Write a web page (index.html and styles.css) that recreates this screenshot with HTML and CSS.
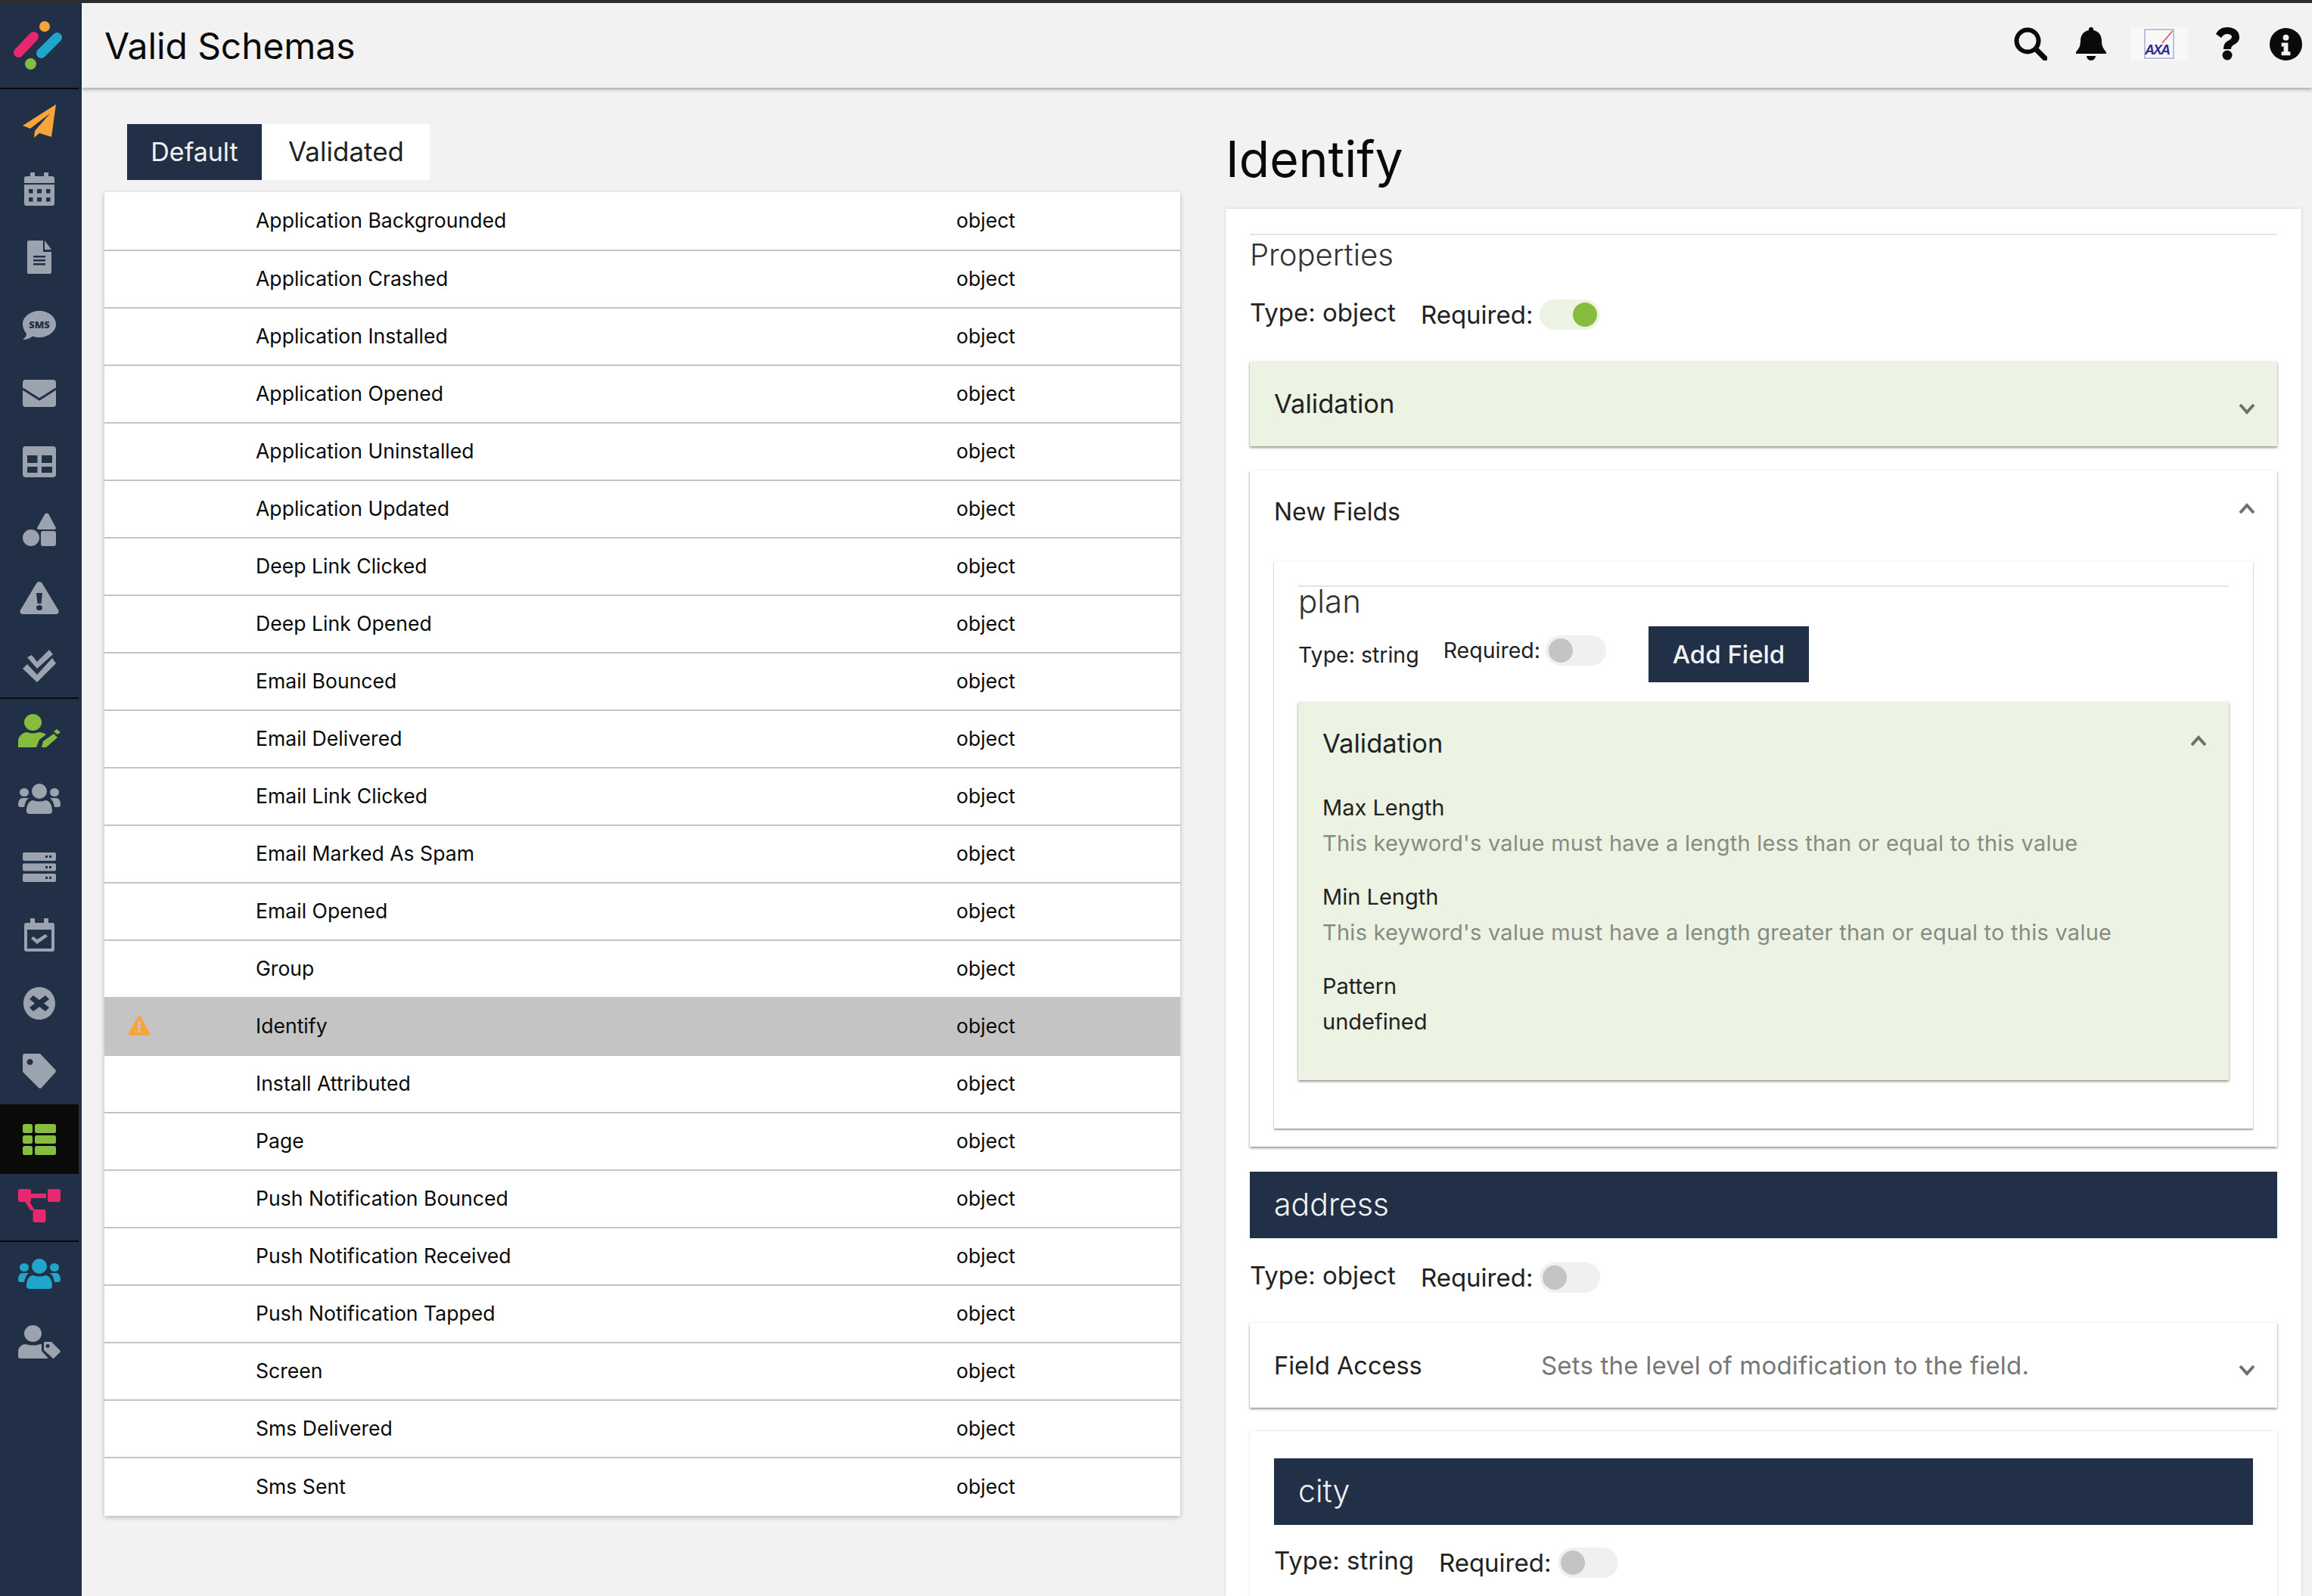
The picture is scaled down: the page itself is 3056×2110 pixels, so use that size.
FILE: index.html
```html
<!DOCTYPE html>
<html lang="en">

<head>
    <meta charset="UTF-8">
    <title>Valid Schemas</title>
    <link rel="stylesheet" href="styles.css">
</head>

<body>
    <div class="app">
        <nav class="sidebar">
            <div class="nav-logo">
                <svg width="64" height="64" viewBox="0 0 64 64">
                    <path d="M6.500 41.500L26.500 20.500" class="logo-pink" />
                    <path d="M36.500 42.500L57.500 21.500" class="logo-blue" />
                    <ellipse cx="41" cy="7" rx="7" ry="7" fill="#f9a43a" />
                    <ellipse cx="22.500" cy="56.500" rx="7.500" ry="7.500" fill="#86bd3f" />
                </svg>
            </div>
            <div class="nav-group group-tools">
                <a class="nav-item"><svg width="44" height="44" viewBox="0 0 44 44" fill="#f9a43a"><path d="M44 0L0 28l10 4 26-20-20 23-1 9 7-6 16 5z" /></svg></a>
                <a class="nav-item"><svg width="40" height="44" viewBox="0 0 40 44" fill="#9aa3ae"><path d="M3 5h5V0h6v5h12V0h6v5h5a3 3 0 0 1 3 3v6H0V8a3 3 0 0 1 3-3zM0 16h40v25a3 3 0 0 1-3 3H3a3 3 0 0 1-3-3z" /><path fill="#213047" d="M6 22h5.500v5.500H6zM17 22h6v5.500h-6zM29 22h5.500v5.500H29zM6 33h5.500v5.500H6zM17 33h6v5.500h-6zM29 33h5.500v5.500H29z" /></svg></a>
                <a class="nav-item"><svg width="32" height="44" viewBox="0 0 32 44" fill="#9aa3ae"><path d="M2 0h19v15h11v27a2 2 0 0 1-2 2H2a2 2 0 0 1-2-2V2a2 2 0 0 1 2-2z" /><path d="M23 0l9 12h-9z" /><path fill="#213047" d="M8 20h16v2.500H8zM8 25h16v2.500H8zM8 30h16v2.500H8z" /></svg></a>
                <a class="nav-item"><svg width="44" height="38" viewBox="0 0 44 38" fill="#9aa3ae"><path d="M22 0c12 0 22 8 22 17.500S34 35 22 35c-3 0-6-.5-9-1.500C10 36 6 38 0 38c3-2 5-5 5-8-3-3-5-8-5-12.500C0 8 10 0 22 0z" /><text x="22" y="23" class="sms-text">SMS</text></svg></a>
                <a class="nav-item"><svg width="44" height="36" viewBox="0 0 44 36" fill="#9aa3ae"><rect width="44" height="36" rx="4" /><path d="M0 12l22 14 22-14" fill="none" stroke="#213047" stroke-width="3" /></svg></a>
                <a class="nav-item"><svg width="44" height="41" viewBox="0 0 44 41" fill="#9aa3ae"><path fill-rule="evenodd" d="M4 0h36a4 4 0 0 1 4 4v33a4 4 0 0 1-4 4H4a4 4 0 0 1-4-4V4a4 4 0 0 1 4-4zM6 12v10h13.500V12zM25 12v10h14V12zM6 27v8h13.500v-8zM25 27v8h14v-8z" /></svg></a>
                <a class="nav-item"><svg width="44" height="44" viewBox="0 0 44 44" fill="#9aa3ae"><path d="M29 2c1.500-2 4-2 5.500 0l9 17c1 1.500 0 3-2 3h-20c-2 0-3-1.500-2-3z" /><circle cx="11" cy="33" r="11" /><rect x="24" y="24" width="20" height="20" rx="3" /></svg></a>
                <a class="nav-item"><svg width="52" height="43" viewBox="0 0 52 43" fill="#9aa3ae"><path d="M26 0c2 0 3 1 4 2.500l21 35c1.500 3 0 5.500-3 5.500H4c-3 0-4.500-2.500-3-5.500l21-35C23 1 24 0 26 0z" /><path fill="#213047" d="M22 15h8l-1.500 14h-5z" /><ellipse cx="26" cy="34.500" rx="4" ry="3.500" fill="#213047" /></svg></a>
                <a class="nav-item"><svg width="44" height="44" viewBox="0 0 44 44" fill="#9aa3ae"><path d="M6 11l6-3 7 9L35 1l5 6-21 19zM0 26l6-6 13 14 20-22 5 7-25 25z" /></svg></a>
            </div>
            <div class="nav-group group-data">
                <a class="nav-item"><svg width="56" height="44" viewBox="0 0 56 44" fill="#86bd3f"><ellipse cx="19.500" cy="11" rx="11.500" ry="11" /><path d="M0 44v-8c0-7 6-12 12-12 5 2 10 2 15 0 4 0 7 1 10 3l-9 7-4 10z" /><path d="M31 44l2-8 14-10 5 5-15 13zM47 23l4-3 5 4-4 3z" /></svg></a>
                <a class="nav-item"><svg width="56" height="40" viewBox="0 0 56 40" fill="#9aa3ae"><ellipse cx="28" cy="10" rx="10" ry="10" /><ellipse cx="8" cy="11.500" rx="6" ry="5.500" /><ellipse cx="48" cy="11.500" rx="6" ry="5.500" /><path d="M15 40a4 4 0 0 1-4-4c0-8 4-14 9-14 5 2 11 2 16 0 5 0 9 6 9 14a4 4 0 0 1-4 4zM0 28c0-5 2-9 6-9h8c-3 2-5 6-6 12H3a3 3 0 0 1-3-3zM56 28c0-5-2-9-6-9h-8c3 2 5 6 6 12h5a3 3 0 0 0 3-3z" /></svg></a>
                <a class="nav-item"><svg width="44" height="39" viewBox="0 0 44 39" fill="#9aa3ae"><path fill-rule="evenodd" d="M2 0h40a2 2 0 0 1 2 2v7a2 2 0 0 1-2 2H2a2 2 0 0 1-2-2V2a2 2 0 0 1 2-2zM30 4v3h3V4zM35 4v3h3V4zM2 14.500h40a2 2 0 0 1 2 2v6a2 2 0 0 1-2 2H2a2 2 0 0 1-2-2v-6a2 2 0 0 1 2-2zM30 18v3h3v-3zM35 18v3h3v-3zM2 28h40a2 2 0 0 1 2 2v7a2 2 0 0 1-2 2H2a2 2 0 0 1-2-2v-7a2 2 0 0 1 2-2zM30 32v3h3v-3zM35 32v3h3v-3z" /></svg></a>
                <a class="nav-item"><svg width="40" height="44" viewBox="0 0 40 44" fill="#9aa3ae"><path fill-rule="evenodd" d="M8 0h6v6h12V0h6v6h5a3 3 0 0 1 3 3v32a3 3 0 0 1-3 3H3a3 3 0 0 1-3-3V9a3 3 0 0 1 3-3h5zM4 15v25h32V15z" /><path d="M9 27l3-3 5 4 11-7 3 3-14 10z" /></svg></a>
                <a class="nav-item"><svg width="42" height="43" viewBox="0 0 42 43" fill="#9aa3ae"><path fill-rule="evenodd" d="M21 0c12 0 21 9.500 21 21.500S33 43 21 43 0 33.500 0 21.500 9 0 21 0zM13 11l-5 5 7 5.500-7 5.500 5 5 8-6 8 6 5-5-7-5.500 7-5.500-5-5-8 6z" /></svg></a>
                <a class="nav-item"><svg width="44" height="46" viewBox="0 0 44 46" fill="#9aa3ae"><path fill-rule="evenodd" d="M3 0h20l20 21a3 3 0 0 1 0 4L25 45a3 3 0 0 1-4 0L1 25a3 3 0 0 1-1-2V3a3 3 0 0 1 3-3zM9.500 7a4 4 0 1 0 .1 0z" /></svg></a>
                <a class="nav-item nav-active"><svg width="44" height="41" viewBox="0 0 44 41" fill="#86bd3f"><rect width="13" height="12" rx="2.500" /><rect x="16" width="28" height="12" rx="2.500" /><rect y="15" width="13" height="11" rx="2.500" /><rect x="16" y="15" width="28" height="11" rx="2.500" /><rect y="29" width="13" height="12" rx="2.500" /><rect x="16" y="29" width="28" height="12" rx="2.500" /></svg></a>
                <a class="nav-item"><svg width="56" height="44" viewBox="0 0 56 44" fill="#e8276f"><rect width="17" height="17" rx="2.500" /><rect x="39" width="17" height="17" rx="2.500" /><rect x="19.500" y="27" width="17" height="17" rx="2.500" /><path d="M15 6h22v6H15zM8 15h6l8 13h-6z" /></svg></a>
            </div>
            <div class="nav-group">
                <a class="nav-item"><svg width="56" height="40" viewBox="0 0 56 40" fill="#20a6cc"><ellipse cx="28" cy="10" rx="10" ry="10" /><ellipse cx="8" cy="11.500" rx="6" ry="5.500" /><ellipse cx="48" cy="11.500" rx="6" ry="5.500" /><path d="M15 40a4 4 0 0 1-4-4c0-8 4-14 9-14 5 2 11 2 16 0 5 0 9 6 9 14a4 4 0 0 1-4 4zM0 28c0-5 2-9 6-9h8c-3 2-5 6-6 12H3a3 3 0 0 1-3-3zM56 28c0-5-2-9-6-9h-8c3 2 5 6 6 12h5a3 3 0 0 0 3-3z" /></svg></a>
                <a class="nav-item"><svg width="56" height="44" viewBox="0 0 56 44" fill="#9aa3ae"><ellipse cx="19.500" cy="11" rx="11.500" ry="11" /><path d="M0 41v-6c0-6 5-10 10-10 6 2 13 2 19 0 1 0 2 0 2 .5V34l9 10H3a3 3 0 0 1-3-3z" /><path fill-rule="evenodd" d="M35 22h9l11 11a2 2 0 0 1 0 3l-7 7a2 2 0 0 1-3 0L34 33v-9a2 2 0 0 1 1-2zM39 25a2.500 2.500 0 1 0 .1 0z" /></svg></a>
            </div>
        </nav>

        <div class="main">
            <header class="topbar">
                <h1 class="page-title">Valid Schemas</h1>
                <div class="top-icons">
                    <svg class="icon-search" viewBox="0 0 44 44" fill="none" stroke="#0a0a0a"><circle cx="18" cy="18" r="14.500" stroke-width="6" /><path d="M29 29l12 12" stroke-width="7" stroke-linecap="round" /></svg>
                    <svg class="icon-bell" viewBox="0 0 40 44" fill="#0a0a0a"><path d="M20 0a3 3 0 0 1 3 4c7 1 11 7 11 14 0 8 3 11 6 15v2H0v-2c3-4 6-7 6-15C6 11 10 5 17 4a3 3 0 0 1 3-4zM14 38h12c0 3-3 6-6 6s-6-3-6-6z" /></svg>
                    <div class="axa-logo">
                        <svg width="40" height="40" viewBox="0 0 40 40">
                            <rect x="1" y="1" width="38" height="38" fill="#f8f8f8" stroke="#a9acd4" stroke-width="1.500" />
                            <path d="M37.500 3L24 19" stroke="#ee3a4e" stroke-width="1.500" />
                            <text x="17" y="34" class="axa-text">AXA</text>
                        </svg>
                    </div>
                    <svg class="icon-help" viewBox="0 0 32 44" fill="#0a0a0a"><path d="M16 0c9 0 16 5 16 13 0 5-3 8-7 10-3 2-4 3-4 6H11c0-6 2-9 6-11 3-2 5-3 5-5 0-3-3-4-6-4-4 0-6 2-8 5L1 9C4 3 9 0 16 0z" /><circle cx="16" cy="37" r="6.500" /></svg>
                    <svg class="icon-info" viewBox="0 0 44 44"><circle cx="22" cy="22" r="22" fill="#0a0a0a" /><circle cx="22" cy="13" r="4" fill="#f2f2f2" /><path d="M16 20h9v12h3v5H16v-5h3v-7h-3z" fill="#f2f2f2" /></svg>
                </div>
            </header>

            <div class="content">
                <section class="left-col">
                    <div class="tabs">
                        <button class="tab tab-on">Default</button>
                        <button class="tab">Validated</button>
                    </div>
                    <table class="schema-table">
                        <colgroup>
                            <col class="col-flag">
                            <col class="col-name">
                            <col>
                        </colgroup>
                        <tbody>
                            <tr><td></td><td>Application Backgrounded</td><td>object</td></tr>
                            <tr><td></td><td>Application Crashed</td><td>object</td></tr>
                            <tr><td></td><td>Application Installed</td><td>object</td></tr>
                            <tr><td></td><td>Application Opened</td><td>object</td></tr>
                            <tr><td></td><td>Application Uninstalled</td><td>object</td></tr>
                            <tr><td></td><td>Application Updated</td><td>object</td></tr>
                            <tr><td></td><td>Deep Link Clicked</td><td>object</td></tr>
                            <tr><td></td><td>Deep Link Opened</td><td>object</td></tr>
                            <tr><td></td><td>Email Bounced</td><td>object</td></tr>
                            <tr><td></td><td>Email Delivered</td><td>object</td></tr>
                            <tr><td></td><td>Email Link Clicked</td><td>object</td></tr>
                            <tr><td></td><td>Email Marked As Spam</td><td>object</td></tr>
                            <tr><td></td><td>Email Opened</td><td>object</td></tr>
                            <tr><td></td><td>Group</td><td>object</td></tr>
                            <tr class="row-selected">
                                <td><svg class="warn" viewBox="0 0 28 26"><path d="M14 0c1 0 2 1 2 1l12 22c1 2 0 3-2 3H2c-2 0-3-1-2-3L12 1s1-1 2-1z" fill="#f9a43a" /><path d="M12 8h4l-.5 9h-3z" fill="#c4c4c4" /><circle cx="14" cy="20.500" r="2" fill="#c4c4c4" /></svg></td>
                                <td>Identify</td><td>object</td>
                            </tr>
                            <tr><td></td><td>Install Attributed</td><td>object</td></tr>
                            <tr><td></td><td>Page</td><td>object</td></tr>
                            <tr><td></td><td>Push Notification Bounced</td><td>object</td></tr>
                            <tr><td></td><td>Push Notification Received</td><td>object</td></tr>
                            <tr><td></td><td>Push Notification Tapped</td><td>object</td></tr>
                            <tr><td></td><td>Screen</td><td>object</td></tr>
                            <tr><td></td><td>Sms Delivered</td><td>object</td></tr>
                            <tr><td></td><td>Sms Sent</td><td>object</td></tr>
                        </tbody>
                    </table>
                </section>

                <section class="right-col">
                    <h2 class="schema-title">Identify</h2>
                    <div class="panel">
                        <div class="rule"></div>
                        <h3 class="light-head">Properties</h3>
                        <div class="type-row">
                            <span class="type-label">Type: object</span>
                            <span class="req">Required:</span>
                            <span class="toggle toggle-on"><i></i></span>
                        </div>

                        <div class="accordion acc-green">
                            <span class="acc-title">Validation</span>
                            <svg class="chev" viewBox="0 0 22 15"><path d="M2 2l9 10 9-10" /></svg>
                        </div>

                        <div class="new-fields">
                            <div class="nf-head">
                                <span>New Fields</span>
                                <svg class="chev" viewBox="0 0 22 15"><path d="M2 13l9-10 9 10" /></svg>
                            </div>
                            <div class="nf-card">
                                <div class="rule"></div>
                                <h3 class="plan-head">plan</h3>
                                <div class="plan-row">
                                    <span class="plan-type">Type: string</span>
                                    <span class="plan-req">Required:</span>
                                    <span class="toggle toggle-sm"><i></i></span>
                                    <button class="add-btn">Add Field</button>
                                </div>
                                <div class="val-card">
                                    <div class="val-head">
                                        <span class="acc-title">Validation</span>
                                        <svg class="chev" viewBox="0 0 22 15"><path d="M2 13l9-10 9 10" /></svg>
                                    </div>
                                    <div class="val-item">
                                        <p>Max Length</p>
                                        <p class="muted">This keyword's value must have a length less than or equal to this value</p>
                                    </div>
                                    <div class="val-item">
                                        <p>Min Length</p>
                                        <p class="muted">This keyword's value must have a length greater than or equal to this value</p>
                                    </div>
                                    <div class="val-item">
                                        <p>Pattern</p>
                                        <p>undefined</p>
                                    </div>
                                </div>
                            </div>
                        </div>

                        <div class="field-bar">address</div>
                        <div class="type-row type-row-address">
                            <span class="type-label">Type: object</span>
                            <span class="req">Required:</span>
                            <span class="toggle"><i></i></span>
                        </div>

                        <div class="accordion acc-white">
                            <span class="acc-name">Field Access</span>
                            <span class="acc-desc">Sets the level of modification to the field.</span>
                            <svg class="chev" viewBox="0 0 22 15"><path d="M2 2l9 10 9-10" /></svg>
                        </div>

                        <div class="sub-card">
                            <div class="field-bar">city</div>
                            <div class="type-row type-row-city">
                                <span class="type-label">Type: string</span>
                                <span class="req">Required:</span>
                                <span class="toggle"><i></i></span>
                            </div>
                        </div>
                    </div>
                </section>
            </div>
        </div>
    </div>
</body>

</html>
```

FILE: styles.css
```css
* {
    margin: 0;
    padding: 0;
    box-sizing: border-box;
}

html,
body {
    height: 100%;
    overflow: hidden;
}

body {
    background: #f2f2f2;
    color: #0a0a0a;
    font-family: "Inter", "Noto Sans", sans-serif;
    font-size: 26.600px;
}

.app {
    display: flex;
    height: 2110px;
    overflow: hidden;
    border-top: 4px solid #2b2d33;
}

/* sidebar */
.sidebar {
    width: 108px;
    flex: none;
    background: #213047;
    display: flex;
    flex-direction: column;
}

.nav-logo {
    height: 112px;
    padding: 24px 0 0 18px;
    flex: none;
}

.logo-pink,
.logo-blue {
    fill: none;
    stroke-width: 13;
    stroke-linecap: round;
}

.logo-pink {
    stroke: #e8276f;
}

.logo-blue {
    stroke: #20a6cc;
}

.nav-group {
    border-top: 2px solid #0a0a08;
    margin-right: 4px;
    flex: none;
}

.group-tools {
    margin-bottom: -6px;
}

.group-data {
    margin-bottom: -2px;
}

.nav-item {
    height: 90px;
    display: flex;
    align-items: center;
    justify-content: center;
    padding-bottom: 6px;
}

.nav-active {
    background: #0a0a08;
    height: 92px;
    margin-top: -4px;
    padding-bottom: 0;
}

.sms-text {
    font: 800 13px "Open Sans", sans-serif;
    fill: #213047;
    text-anchor: middle;
}

/* top bar */
.main {
    flex: 1;
    min-width: 0;
}

.topbar {
    height: 112px;
    background: #f2f2f2;
    box-shadow: 0 2px 5px rgba(0, 0, 0, 0.35);
    display: flex;
    align-items: center;
    justify-content: space-between;
    padding: 0 13px 0 30px;
    position: relative;
}

.page-title {
    font-weight: 400;
    font-size: 48px;
    letter-spacing: -0.100px;
}

.top-icons {
    display: flex;
    align-items: center;
    margin-bottom: 4px;
}

.top-icons svg {
    flex: none;
}

.icon-search {
    width: 44px;
    height: 44px;
}

.icon-bell {
    width: 40px;
    height: 44px;
    margin-left: 38px;
}

.axa-logo {
    width: 76px;
    height: 44px;
    margin-left: 32px;
    background: #f8f8f8;
    display: flex;
    align-items: center;
    justify-content: center;
}

.axa-text {
    font: italic 700 18px "Liberation Sans", sans-serif;
    fill: #2a2f94;
    text-anchor: middle;
    letter-spacing: -2px;
}

.icon-help {
    width: 32px;
    height: 44px;
    margin-left: 36px;
}

.icon-info {
    width: 43px;
    height: 43px;
    margin-left: 40px;
}

/* two columns */
.content {
    display: flex;
    padding-left: 30px;
}

.left-col {
    width: 1422px;
    flex: none;
    padding-top: 48px;
}

.tabs {
    display: flex;
    padding-left: 30px;
    margin-bottom: 16px;
}

.tab {
    height: 74px;
    width: 221px;
    border: 0;
    font: inherit;
    font-size: 35px;
    padding-bottom: 2px;
    background: #fff;
    color: #222;
}

.tab-on {
    width: 178px;
    font-size: 34px;
    background: #213047;
    color: #f2f2f2;
    margin-right: 1px;
}

.schema-table {
    width: 100%;
    background: #fff;
    border-collapse: separate;
    border-spacing: 0;
    table-layout: fixed;
    box-shadow: 0 2px 6px rgba(0, 0, 0, 0.25);
}

.col-flag {
    width: 200px;
}

.col-name {
    width: 926px;
}

.schema-table td {
    height: 76px;
    border-bottom: 2px solid #c4c4c4;
    padding-bottom: 2px;
    vertical-align: middle;
}

.schema-table tr:first-child td {
    height: 78px;
}

.schema-table tr:last-child td {
    border-bottom: 0;
}

.row-selected td {
    background: #c4c4c4;
}

.warn {
    display: block;
    width: 28px;
    height: 26px;
    margin-left: 32px;
}

/* right column */
.right-col {
    width: 1422px;
    flex: none;
    margin-left: 60px;
}

.schema-title {
    font-weight: 400;
    font-size: 66px;
    line-height: 96px;
    margin-top: 46px;
    margin-bottom: 18px;
}

.panel {
    background: #fff;
    padding: 33px 32px 0;
    height: 1834px;
    overflow: hidden;
    box-shadow: 0 0 4px rgba(0, 0, 0, 0.15);
}

.rule {
    height: 2px;
    background: #e0e4e8;
}

.light-head {
    font-weight: 300;
    font-size: 40px;
    line-height: 52px;
    color: #333;
    margin-bottom: 33px;
}

.type-row {
    display: flex;
    align-items: center;
    font-size: 33px;
    height: 40px;
    color: #222;
}

.type-label {
    margin-bottom: 6px;
}

.req {
    margin-left: 33px;
    margin-right: 9px;
}

.toggle {
    display: inline-block;
    flex: none;
    width: 80px;
    height: 40px;
    border-radius: 20px;
    background: #f0f0f0;
    padding: 4px;
}

.toggle i {
    display: block;
    width: 32px;
    height: 32px;
    border-radius: 50%;
    background: #c4c4c4;
}

.toggle-on {
    background: #ecf3e2;
}

.toggle-on i {
    background: #86bd3f;
    margin-left: 40px;
}

.accordion {
    display: flex;
    align-items: center;
    height: 112px;
    padding: 0 29px 0 32px;
    font-size: 33px;
    color: #222;
    margin-top: 42px;
    box-shadow: 0 2px 3px rgba(0, 0, 0, 0.4), 0 0 2px rgba(0, 0, 0, 0.1);
}

.acc-green {
    background: #ecf3e2;
    margin-bottom: 32px;
    padding-bottom: 2px;
}

.acc-green .chev {
    margin-top: 14px;
}

.acc-white {
    background: #fff;
    margin-top: 40px;
}

.acc-title {
    font-size: 34.500px;
}

.acc-name {
    width: 353px;
    flex: none;
    font-size: 32.500px;
}

.acc-desc {
    color: #777;
    letter-spacing: 0.200px;
}

.chev {
    flex: none;
    width: 22px;
    height: 15px;
    margin-left: auto;
    margin-top: 12px;
    fill: none;
    stroke: #6f716c;
    stroke-width: 4;
}

.new-fields {
    padding: 0 32px 24px;
    box-shadow: 0 2px 3px rgba(0, 0, 0, 0.4), 0 0 2px rgba(0, 0, 0, 0.1);
    margin-bottom: 33px;
}

.nf-head {
    display: flex;
    align-items: center;
    height: 120px;
    padding: 0 0 12px;
    margin-right: -3px;
    font-size: 32px;
    color: #222;
}

.nf-head .chev {
    margin-top: -8px;
}

.nf-card {
    padding: 32px 32px 64px;
    box-shadow: 0 2px 2px rgba(0, 0, 0, 0.35), 0 0 2px rgba(0, 0, 0, 0.1);
}

.plan-head {
    font-weight: 300;
    font-size: 42px;
    line-height: 38px;
    color: #333;
    margin-bottom: 14px;
}

.plan-row {
    display: flex;
    align-items: center;
    height: 74px;
    font-size: 28.500px;
    color: #222;
}

.plan-req {
    margin-left: 32px;
    margin-right: 7px;
    margin-top: -12px;
}

.toggle-sm {
    margin-top: -10px;
}

.add-btn {
    height: 74px;
    width: 212px;
    margin-left: 56px;
    border: 0;
    background: #213047;
    color: #f2f2f2;
    font: inherit;
    font-size: 33px;
    font-weight: 500;
}

.val-card {
    background: #ecf3e2;
    margin-top: 26px;
    padding: 0 29px 0 32px;
    height: 500px;
    box-shadow: 0 2px 3px rgba(0, 0, 0, 0.4), 0 0 2px rgba(0, 0, 0, 0.1);
}

.val-head {
    display: flex;
    align-items: center;
    height: 108px;
    margin-bottom: 8px;
    color: #222;
}

.val-head .chev {
    margin-top: -6px;
}

.val-item {
    font-size: 29px;
    line-height: 47px;
    color: #222;
    margin-bottom: 24px;
}

.muted {
    color: #878c82;
    letter-spacing: 0.250px;
}

.field-bar {
    background: #213047;
    color: #f2f2f2;
    font-weight: 300;
    font-size: 41px;
    height: 88px;
    line-height: 86px;
    padding-left: 32px;
}

.type-row-address {
    margin-top: 32px;
}

.type-row-city {
    margin-top: 30px;
}

.sub-card {
    margin-top: 31px;
    padding: 36px 32px 0;
    height: 240px;
    box-shadow: 0 0 3px rgba(0, 0, 0, 0.15);
}
```
